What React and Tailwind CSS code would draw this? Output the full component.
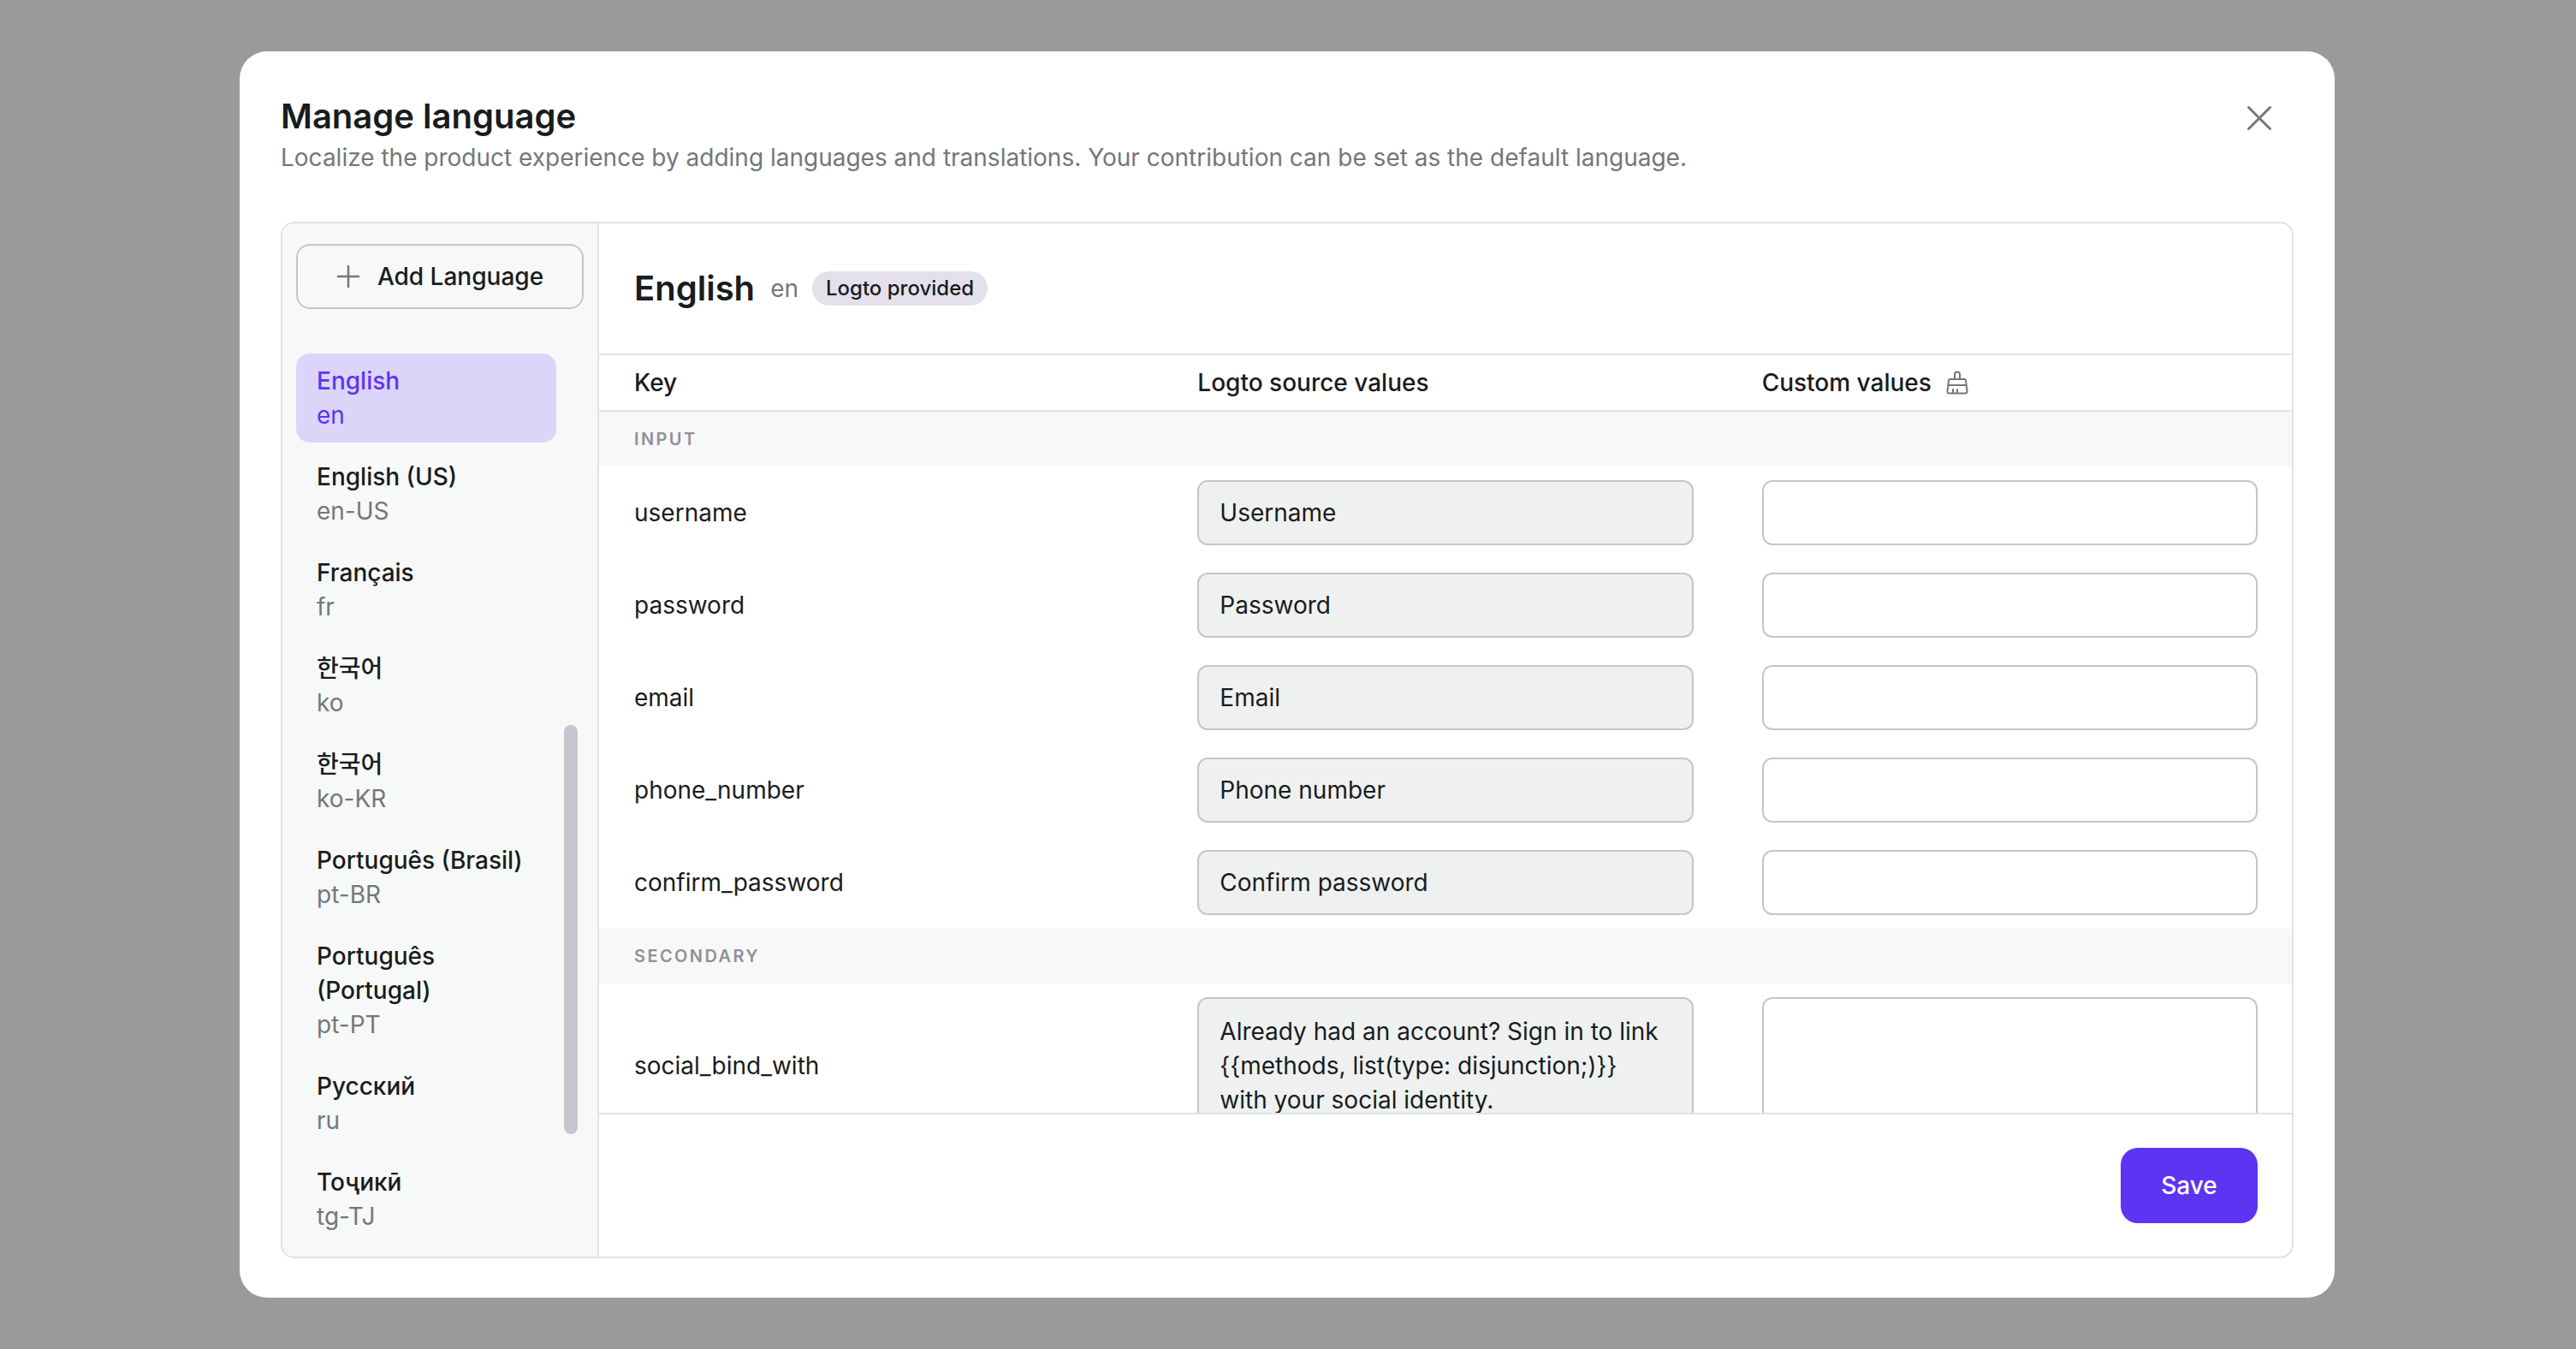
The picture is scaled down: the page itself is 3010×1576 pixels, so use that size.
import React from "react";

const langs = [
  { name: "English", code: "en", active: true },
  { name: "English (US)", code: "en-US" },
  { name: "Français", code: "fr" },
  { name: "한국어", code: "ko" },
  { name: "한국어", code: "ko-KR" },
  { name: "Português (Brasil)", code: "pt-BR" },
  { name: "Português (Portugal)", code: "pt-PT" },
  { name: "Русский", code: "ru" },
  { name: "Тоҷикӣ", code: "tg-TJ" },
];

const inputRows = [
  ["username", "Username"],
  ["password", "Password"],
  ["email", "Email"],
  ["phone_number", "Phone number"],
  ["confirm_password", "Confirm password"],
];

function Broom() {
  return (
    <svg width="28" height="28" viewBox="0 0 28 28" fill="none" stroke="#747778" strokeWidth="2" strokeLinecap="round" strokeLinejoin="round">
      <path d="M11 10V4.5a3 3 0 0 1 6 0V10" />
      <path d="M5.5 10h17a1.5 1.5 0 0 1 1.5 1.3L25.5 24a2 2 0 0 1-2 2.5h-19a2 2 0 0 1-2-2.5L4 11.3A1.5 1.5 0 0 1 5.5 10Z" />
      <path d="M3.5 17h21" />
      <path d="M9 26v-4M14 26v-4" />
    </svg>
  );
}

function SectionBand({ label }) {
  return (
    <div className="flex h-[64px] items-center bg-[#f7f8f8] pl-[41px] text-[20px] font-semibold tracking-[2.4px] text-[#928f9a]">
      {label}
    </div>
  );
}

function Row({ k, v }) {
  return (
    <div className="grid h-[108px] grid-cols-3 items-center">
      <div className="pl-[41px] text-[28px] leading-[40px] text-[#191c1d]">{k}</div>
      <div className="px-[40px]">
        <div className="flex h-[76px] items-center rounded-[12px] border-2 border-[#c4c7c7] bg-[#eff1f1] px-[24px] text-[28px] text-[#191c1d]">{v}</div>
      </div>
      <div className="px-[40px]">
        <div className="h-[76px] rounded-[12px] border-2 border-[#c4c7c7] bg-white" />
      </div>
    </div>
  );
}

export default function App() {
  return (
    <div className="flex h-[1576px] w-full items-center bg-[#9a9a9a] pl-[280px] font-['Inter','Noto_Sans_CJK_KR',sans-serif]">
      <div className="flex h-[1456px] w-[2448px] flex-col rounded-[32px] bg-white px-[48px] pb-[46px] pt-[48px]">
        <div className="flex h-[151px] shrink-0 items-start justify-between">
          <div>
            <div className="text-[40px] font-semibold leading-[56px] text-[#191c1d]">Manage language</div>
            <div className="text-[28px] leading-[40px] text-[#747778]">
              Localize the product experience by adding languages and translations. Your contribution can be set as the default language.
            </div>
          </div>
          <svg className="mr-[24px] mt-[14px]" width="32" height="32" viewBox="0 0 32 32" fill="none" stroke="#747778" strokeWidth="3" strokeLinecap="round">
            <path d="M3.5 3.5l25 25M28.5 3.5l-25 25" />
          </svg>
        </div>

        <div className="flex min-h-0 flex-1 overflow-hidden rounded-[16px] border-2 border-[#e0e3e3]">
          <div className="relative flex w-[370px] shrink-0 flex-col overflow-hidden border-r-2 border-[#e0e3e3] bg-[#f7f8f8]">
            <div className="px-[16px] pt-[24px]">
              <div className="flex h-[76px] items-center justify-center gap-[20px] rounded-[16px] border-2 border-[#c4c7c7] text-[28px] font-medium text-[#191c1d]">
                <svg width="28" height="28" viewBox="0 0 28 28" fill="none" stroke="#747778" strokeWidth="2.5" strokeLinecap="round">
                  <path d="M14 2v24M2 14h24" />
                </svg>
                Add Language
              </div>
            </div>
            <div className="mt-[52px] flex flex-col gap-[8px] pl-[16px] pr-[48px]">
              {langs.map((l) => (
                <div key={l.code} className={`rounded-[16px] px-[24px] py-[12px] text-[28px] leading-[40px] ${l.active ? "bg-[#dbd5f9]" : ""}`}>
                  <div className={`font-medium ${l.active ? "text-[#5d34f2]" : "text-[#191c1d]"}`}>{l.name}</div>
                  <div className={l.active ? "text-[#5d34f2]" : "text-[#747778]"}>{l.code}</div>
                </div>
              ))}
            </div>
            <div className="absolute left-[329px] top-[586px] h-[478px] w-[16px] rounded-[8px] bg-[#c9c5d0]" />
          </div>

          <div className="flex min-w-0 flex-1 flex-col">
            <div className="flex h-[154px] shrink-0 items-center border-b-2 border-[#e0e3e3] pl-[41px]">
              <span className="text-[40px] font-semibold leading-[56px] text-[#191c1d]">English</span>
              <span className="ml-[18px] text-[28px] text-[#747778]">en</span>
              <span className="ml-[16px] flex h-[40px] items-center rounded-full bg-[#e5e1ec] px-[16px] text-[24px] font-medium text-[#191c1d]">Logto provided</span>
            </div>
            <div className="grid h-[66px] shrink-0 grid-cols-3 items-center border-b-2 border-[#e0e3e3] text-[28px] font-medium text-[#191c1d]">
              <div className="pl-[41px]">Key</div>
              <div className="pl-[40px]">Logto source values</div>
              <div className="flex items-center gap-[16px] pl-[40px]">Custom values <Broom /></div>
            </div>
            <div className="min-h-0 flex-1 overflow-hidden">
              <SectionBand label="INPUT" />
              {inputRows.map(([k, v]) => <Row key={k} k={k} v={v} />)}
              <SectionBand label="SECONDARY" />
              <div className="grid h-[192px] grid-cols-3 items-center">
                <div className="pl-[41px] text-[28px] leading-[40px] text-[#191c1d]">social_bind_with</div>
                <div className="px-[40px]">
                  <div className="h-[160px] rounded-[12px] border-2 border-[#c4c7c7] bg-[#eff1f1] px-[24px] py-[18px] text-[28px] leading-[40px] text-[#191c1d]">
                    Already had an account? Sign in to link {"{{methods, list(type: disjunction;)}}"} with your social identity.
                  </div>
                </div>
                <div className="px-[40px]">
                  <div className="h-[160px] rounded-[12px] border-2 border-[#c4c7c7] bg-white" />
                </div>
              </div>
            </div>
            <div className="flex h-[168px] shrink-0 items-center justify-end border-t-2 border-[#e0e3e3] pr-[40px]">
              <button className="flex h-[88px] w-[160px] items-center justify-center rounded-[20px] bg-[#5d34f2] text-[28px] font-medium text-white">Save</button>
            </div>
          </div>
        </div>
      </div>
    </div>
  );
}
